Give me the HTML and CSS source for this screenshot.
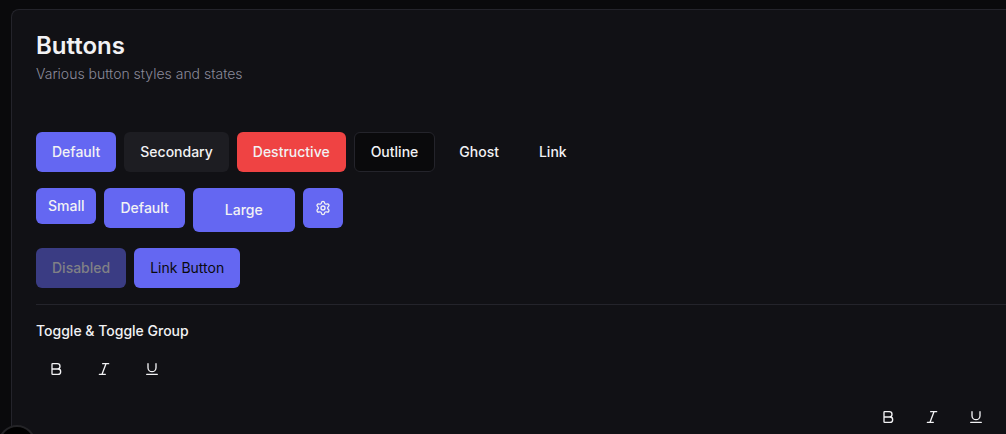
FILE: index.html
```html
<!DOCTYPE html>
<html lang="en">
    <head>
        <meta charset="utf-8">
        <title>Buttons</title>
        <link rel="stylesheet" href="styles.css">
    </head>
    <body>
        <svg class="sprite" aria-hidden="true">
            <symbol id="icon-bold" viewBox="0 0 24 24">
                <path d="M6 12h9a4 4 0 0 1 0 8H7a1 1 0 0 1-1-1V5a1 1 0 0 1 1-1h7a4 4 0 0 1 0 8"/>
            </symbol>
            <symbol id="icon-italic" viewBox="0 0 24 24">
                <path d="M19 4h-9M14 20H5M15 4 9 20"/>
            </symbol>
            <symbol id="icon-underline" viewBox="0 0 24 24">
                <path d="M6 4v6a6 6 0 0 0 12 0V4M4 20h16"/>
            </symbol>
            <symbol id="icon-settings" viewBox="0 0 24 24">
                <path d="M9.671 4.136a2.34 2.34 0 0 1 4.659 0 2.34 2.34 0 0 0 3.319 1.915 2.34 2.34 0 0 1 2.33 4.033 2.34 2.34 0 0 0 0 3.831 2.34 2.34 0 0 1-2.33 4.033 2.34 2.34 0 0 0-3.319 1.915 2.34 2.34 0 0 1-4.659 0 2.34 2.34 0 0 0-3.32-1.915 2.34 2.34 0 0 1-2.33-4.033 2.34 2.34 0 0 0 0-3.831A2.34 2.34 0 0 1 6.35 6.051a2.34 2.34 0 0 0 3.319-1.915"/>
                <circle cx="12" cy="12" r="3"/>
            </symbol>
        </svg>
        <main class="card">
            <header class="card-header">
                <h1 class="card-title">Buttons</h1>
                <p class="card-description">Various button styles and states</p>
            </header>
            <div class="card-content">
                <div class="row">
                    <button class="btn">Default</button>
                    <button class="btn secondary">Secondary</button>
                    <button class="btn destructive">Destructive</button>
                    <button class="btn outline">Outline</button>
                    <button class="btn ghost">Ghost</button>
                    <button class="btn ghost link">Link</button>
                </div>
                <div class="row">
                    <button class="btn small">Small</button>
                    <button class="btn">Default</button>
                    <button class="btn large">Large</button>
                    <button class="btn icon-btn" aria-label="Settings"><svg class="icon"><use href="#icon-settings"/></svg></button>
                </div>
                <div class="row">
                    <button class="btn" disabled>Disabled</button>
                    <a class="btn link-button" href="#">Link Button</a>
                </div>
                <hr class="separator">
                <section class="toggles">
                    <h2 class="label">Toggle &amp; Toggle Group</h2>
                    <div class="row">
                        <button class="toggle" aria-label="Bold"><svg class="icon"><use href="#icon-bold"/></svg></button>
                        <button class="toggle" aria-label="Italic"><svg class="icon"><use href="#icon-italic"/></svg></button>
                        <button class="toggle" aria-label="Underline"><svg class="icon"><use href="#icon-underline"/></svg></button>
                    </div>
                    <div class="toggle-group" role="group">
                        <button class="toggle" aria-label="Bold"><svg class="icon"><use href="#icon-bold"/></svg></button>
                        <button class="toggle" aria-label="Italic"><svg class="icon"><use href="#icon-italic"/></svg></button>
                        <button class="toggle" aria-label="Underline"><svg class="icon"><use href="#icon-underline"/></svg></button>
                    </div>
                </section>
            </div>
        </main>
        <div class="badge"></div>
    </body>
</html>
```
FILE: styles.css
```css
*{
    box-sizing: border-box;
}
body{
    display: flex;
    flex-direction: column;
    margin: 0;
    padding: 9px 0 0 11px;
    height: 100vh;
    overflow: hidden;
    background: #0a0a0c;
    color: #f2f2f4;
    font-family: Inter, "Liberation Sans", sans-serif;
    font-size: 14px;
    line-height: 20px;
}
.sprite{
    display: none;
}
.card{
    flex: 1;
    background: #111115;
    border: 1px solid #24242b;
    border-right: none;
    border-bottom: none;
    border-radius: 8px 0 0 0;
}
.card-header{
    display: flex;
    flex-direction: column;
    gap: 6px;
    padding: 24px;
}
.card-title{
    margin: 0;
    font-size: 24px;
    line-height: 24px;
    font-weight: 600;
}
.card-description{
    margin: 0;
    color: #8a8a9a;
    font-weight: 300;
}
.card-content{
    display: flex;
    flex-direction: column;
    gap: 16px;
    padding: 24px 0 0 24px;
}
.row{
    display: flex;
    flex-wrap: wrap;
    align-items: flex-start;
    gap: 8px;
}
.btn{
    display: inline-flex;
    align-items: center;
    justify-content: center;
    height: 40px;
    padding: 0 16px;
    border: none;
    border-radius: 6px;
    background: #6467f2;
    color: #f2f2f4;
    font-family: inherit;
    font-size: 14px;
    line-height: 20px;
    font-weight: 500;
    text-decoration: none;
    cursor: pointer;
}
.btn:disabled{
    background: #3a3c83;
    color: #808086;
    cursor: default;
}
.secondary{
    background: #1d1d22;
}
.destructive{
    background: #ef4343;
}
.outline{
    background: #0a0a0c;
    border: 1px solid #24242b;
}
.ghost{
    background: transparent;
}
.link:hover{
    text-decoration: underline;
}
.small{
    height: 36px;
    padding: 0 12px;
}
.large{
    height: 44px;
    padding: 0 32px;
}
.icon-btn{
    width: 40px;
    padding: 0;
}
.link-button{
    color: #0a0a0c;
    font-weight: 400;
}
.icon{
    width: 16px;
    height: 16px;
    fill: none;
    stroke: currentColor;
    stroke-width: 2;
    stroke-linecap: round;
    stroke-linejoin: round;
}
.separator{
    width: 100%;
    height: 1px;
    margin: 0;
    border: none;
    background: #24242b;
}
.toggles{
    display: flex;
    flex-direction: column;
    gap: 8px;
}
.label{
    margin: 0;
    font-size: 14px;
    font-weight: 500;
}
.toggle{
    display: flex;
    align-items: center;
    justify-content: center;
    width: 40px;
    height: 40px;
    padding: 0;
    border: none;
    border-radius: 6px;
    background: transparent;
    color: #f2f2f4;
    cursor: pointer;
}
.toggle-group{
    display: flex;
    justify-content: flex-end;
    gap: 4px;
    padding-right: 10px;
}
/* round button peeking in at the corner */
.badge{
    position: fixed;
    left: -2px;
    bottom: -29px;
    width: 38px;
    height: 38px;
    border: 2px solid #242427;
    border-radius: 50%;
    background: #000;
}
```
